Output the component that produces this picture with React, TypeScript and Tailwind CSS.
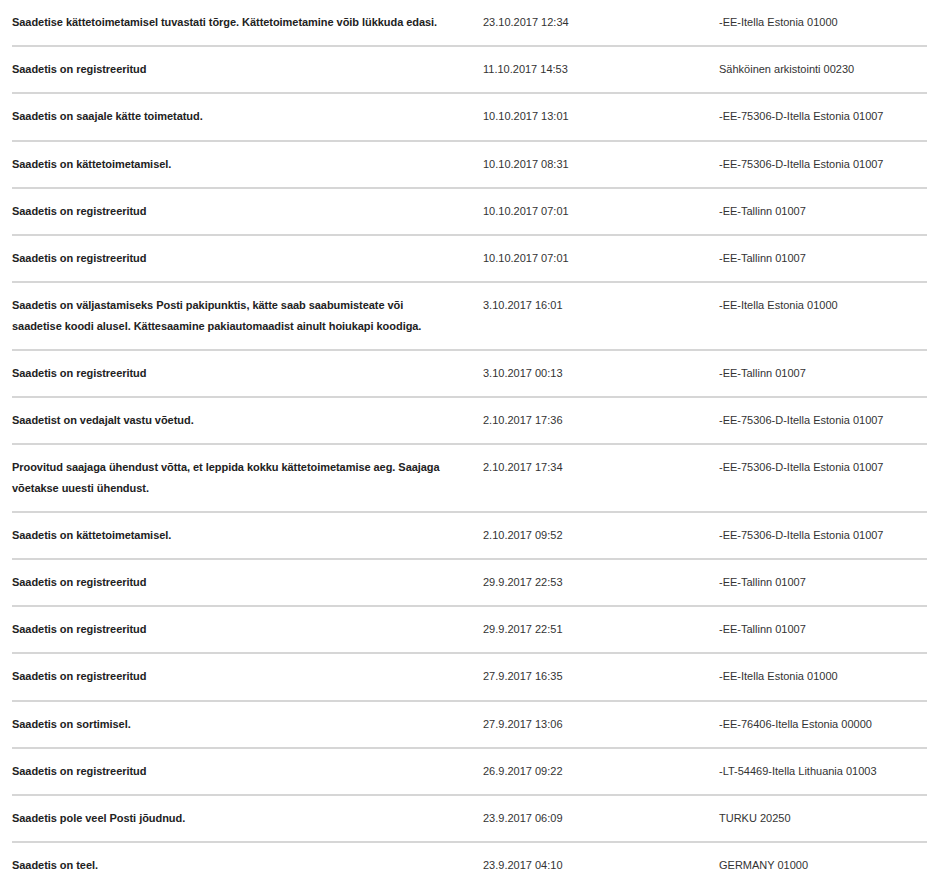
const rows: [string, string, string][] = [
  ["Saadetise kättetoimetamisel tuvastati tõrge. Kättetoimetamine võib lükkuda edasi.", "23.10.2017 12:34", "-EE-Itella Estonia 01000"],
  ["Saadetis on registreeritud", "11.10.2017 14:53", "Sähköinen arkistointi 00230"],
  ["Saadetis on saajale kätte toimetatud.", "10.10.2017 13:01", "-EE-75306-D-Itella Estonia 01007"],
  ["Saadetis on kättetoimetamisel.", "10.10.2017 08:31", "-EE-75306-D-Itella Estonia 01007"],
  ["Saadetis on registreeritud", "10.10.2017 07:01", "-EE-Tallinn 01007"],
  ["Saadetis on registreeritud", "10.10.2017 07:01", "-EE-Tallinn 01007"],
  ["Saadetis on väljastamiseks Posti pakipunktis, kätte saab saabumisteate või saadetise koodi alusel. Kättesaamine pakiautomaadist ainult hoiukapi koodiga.", "3.10.2017 16:01", "-EE-Itella Estonia 01000"],
  ["Saadetis on registreeritud", "3.10.2017 00:13", "-EE-Tallinn 01007"],
  ["Saadetist on vedajalt vastu võetud.", "2.10.2017 17:36", "-EE-75306-D-Itella Estonia 01007"],
  ["Proovitud saajaga ühendust võtta, et leppida kokku kättetoimetamise aeg. Saajaga võetakse uuesti ühendust.", "2.10.2017 17:34", "-EE-75306-D-Itella Estonia 01007"],
  ["Saadetis on kättetoimetamisel.", "2.10.2017 09:52", "-EE-75306-D-Itella Estonia 01007"],
  ["Saadetis on registreeritud", "29.9.2017 22:53", "-EE-Tallinn 01007"],
  ["Saadetis on registreeritud", "29.9.2017 22:51", "-EE-Tallinn 01007"],
  ["Saadetis on registreeritud", "27.9.2017 16:35", "-EE-Itella Estonia 01000"],
  ["Saadetis on sortimisel.", "27.9.2017 13:06", "-EE-76406-Itella Estonia 00000"],
  ["Saadetis on registreeritud", "26.9.2017 09:22", "-LT-54469-Itella Lithuania 01003"],
  ["Saadetis pole veel Posti jõudnud.", "23.9.2017 06:09", "TURKU 20250"],
  ["Saadetis on teel.", "23.9.2017 04:10", "GERMANY 01000"],
];

export default function App() {
  return (
    <div className="bg-white min-h-[888px] pl-[12px] pr-[25px] text-[11px] leading-[20.4px] text-[#333]" style={{ fontFamily: '"Liberation Sans", Arial, sans-serif' }}>
      {rows.map((r, i) => (
        <div key={i} className="grid grid-cols-[471px_236px_1fr] border-b-2 border-[#d6d6d6] pt-[12px] pb-[12.8px]">
          <div className="font-bold text-[#222] tracking-[-0.05px] pr-[40px]">{r[0]}</div>
          <div>{r[1]}</div>
          <div>{r[2]}</div>
        </div>
      ))}
    </div>
  );
}
